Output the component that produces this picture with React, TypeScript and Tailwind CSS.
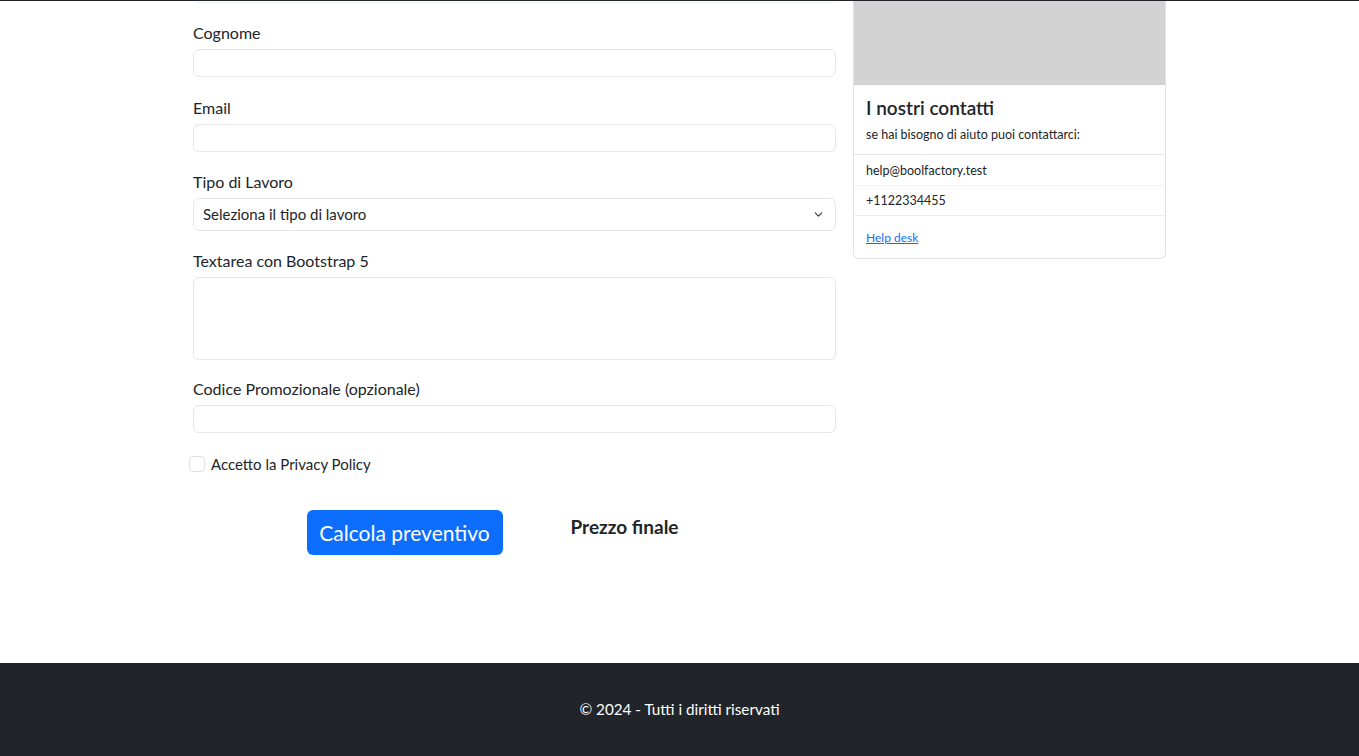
import { ChevronDown } from "lucide-react";

const font = { fontFamily: "Lato, 'Noto Sans', sans-serif" };

function Field({
  label,
  gap,
  children,
}: {
  label: string;
  gap: string;
  children: React.ReactNode;
}) {
  return (
    <div className={gap}>
      <label className="mb-1 block text-base leading-6 text-[#212529]">
        {label}
      </label>
      {children}
    </div>
  );
}

export default function App() {
  return (
    <div
      className="flex min-h-screen flex-col bg-white text-[#212529]"
      style={font}
    >
      <div className="h-px bg-[#212529]" />

      <main className="flex-1">
        <div className="mx-auto flex w-[973px] gap-[17px]">
          {/* form column */}
          <div className="w-[643px]">
            <div className="h-[2px] overflow-hidden">
              <div className="-mt-[10px] h-[12px] rounded-b-md border border-[#e9ecef]" />
            </div>

            <div className="pt-[18px]">
              <Field label="Cognome" gap="mb-[19px]">
                <input className="block h-[28px] w-full rounded-md border border-[#e5e7eb] px-3 outline-none" />
              </Field>
              <Field label="Email" gap="mb-[18px]">
                <input className="block h-[28px] w-full rounded-md border border-[#e5e7eb] px-3 outline-none" />
              </Field>
              <Field label="Tipo di Lavoro" gap="mb-[18px]">
                <div className="flex h-[33px] w-full items-center justify-between rounded-md border border-[#e5e7eb] pl-[9px] pr-[10px]">
                  <span className="text-[15px]">Seleziona il tipo di lavoro</span>
                  <ChevronDown size={13} strokeWidth={2} className="text-[#343a40]" />
                </div>
              </Field>
              <Field label="Textarea con Bootstrap 5" gap="mb-[17px]">
                <textarea className="block h-[83px] w-full resize-none rounded-md border border-[#e5e7eb] px-3 py-1 outline-none" />
              </Field>
              <Field label="Codice Promozionale (opzionale)" gap="mb-0">
                <input className="block h-[28px] w-full rounded-md border border-[#e5e7eb] px-3 outline-none" />
              </Field>

              <div className="-ml-1 mt-[19px] flex items-center gap-[6px]">
                <span className="block h-4 w-4 rounded border border-[#dee2e6]" />
                <span className="text-[15px] leading-6">Accetto la Privacy Policy</span>
              </div>

              <div className="mt-[34px] flex justify-center">
                <div className="flex w-[220px] justify-center">
                  <button className="h-[45px] w-[196px] rounded-md bg-[#0d6efd] text-[21px] text-white">
                    Calcola preventivo
                  </button>
                </div>
                <div className="flex w-[220px] justify-center pt-[5px]">
                  <span className="text-[19px] font-bold leading-6">Prezzo finale</span>
                </div>
              </div>
            </div>
          </div>

          {/* contacts card */}
          <div className="w-[313px] self-start">
            <div className="overflow-hidden rounded-b-md border border-t-0 border-[#dee2e6]">
              <div className="h-[84px] bg-[#d3d3d3]" />
              <div className="px-[12px] pb-[9px] pt-[11px]">
                <h5 className="text-[19px] font-semibold leading-6">I nostri contatti</h5>
                <p className="mt-[5px] text-[12.5px] leading-5">
                  se hai bisogno di aiuto puoi contattarci:
                </p>
              </div>
              <ul className="border-t border-[#e5e7eb] text-[12.5px]">
                <li className="flex h-[31px] items-center border-b border-[#f1f3f5] px-[12px] pt-[2px]">
                  help@boolfactory.test
                </li>
                <li className="flex h-[30px] items-center border-b border-[#eceef0] px-[12px] pt-[2px]">
                  +1122334455
                </li>
              </ul>
              <div className="flex h-[42px] items-center px-[12px] pt-[2px]">
                <a href="#" className="text-[12px] text-[#0d6efd] underline">
                  Help desk
                </a>
              </div>
            </div>
          </div>
        </div>
      </main>

      <footer className="flex h-[93px] items-center justify-center bg-[#212529]">
        <span className="text-[15.25px] text-white">© 2024 - Tutti i diritti riservati</span>
      </footer>
    </div>
  );
}
